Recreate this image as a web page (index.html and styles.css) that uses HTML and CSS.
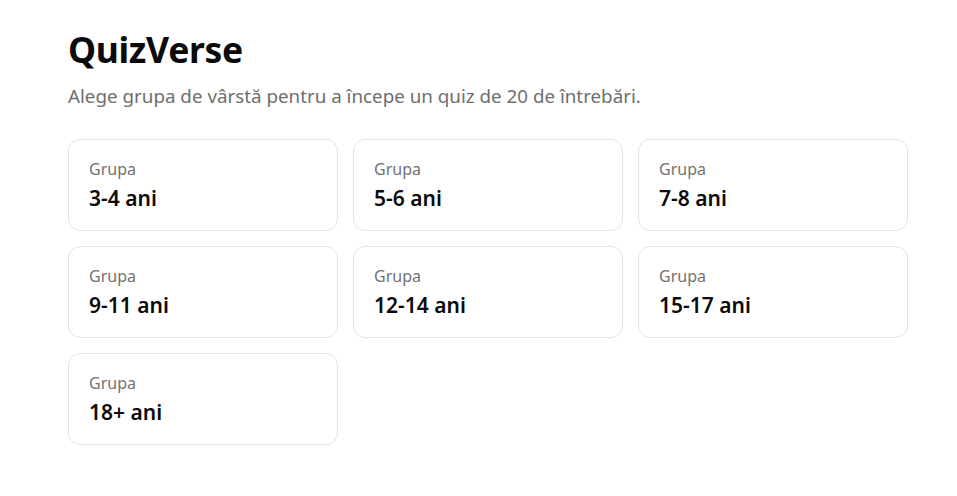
FILE: index.html
```html
<!DOCTYPE html>
<html lang="ro">
<head>
<meta charset="utf-8">
<title>QuizVerse</title>
<link rel="stylesheet" href="styles.css">
</head>
<body>
<main class="page">
  <h1 class="title">QuizVerse</h1>
  <p class="subtitle">Alege grupa de vârstă pentru a începe un quiz de 20 de întrebări.</p>
  <div class="grid">
    <button class="card"><span class="label">Grupa</span><span class="age">3-4 ani</span></button>
    <button class="card"><span class="label">Grupa</span><span class="age">5-6 ani</span></button>
    <button class="card"><span class="label">Grupa</span><span class="age">7-8 ani</span></button>
    <button class="card"><span class="label">Grupa</span><span class="age">9-11 ani</span></button>
    <button class="card"><span class="label">Grupa</span><span class="age">12-14 ani</span></button>
    <button class="card"><span class="label">Grupa</span><span class="age">15-17 ani</span></button>
    <button class="card"><span class="label">Grupa</span><span class="age">18+ ani</span></button>
  </div>
</main>
</body>
</html>
```
FILE: styles.css
```css
* { box-sizing: border-box; }
html, body { margin: 0; background: #fff; }
body {
  font-family: "Noto Sans", "Open Sans", sans-serif;
  color: #111;
}
.page {
  width: 840px;
  margin-left: 68px;
  padding-top: 27px;
}
.title {
  margin: 0;
  font-size: 35.5px;
  line-height: 44px;
  font-weight: 700;
  color: #0b0b0b;
  letter-spacing: -0.3px;
}
.subtitle {
  margin: 12px 0 0;
  font-size: 18.8px;
  line-height: 26px;
  color: #6e6e6e;
}
.grid {
  margin-top: 30px;
  display: grid;
  grid-template-columns: repeat(3, 270px);
  gap: 15px;
}
.card {
  display: flex;
  flex-direction: column;
  align-items: flex-start;
  height: 92px;
  padding: 18px 20px;
  background: #fff;
  border: 1px solid #e4e4e4;
  border-radius: 12px;
  font-family: inherit;
  text-align: left;
  cursor: pointer;
}
.label {
  font-size: 16px;
  line-height: 22px;
  color: #727272;
}
.age {
  margin-top: 5px;
  font-size: 21px;
  line-height: 27px;
  font-weight: 600;
  color: #0b0b0b;
}
```
